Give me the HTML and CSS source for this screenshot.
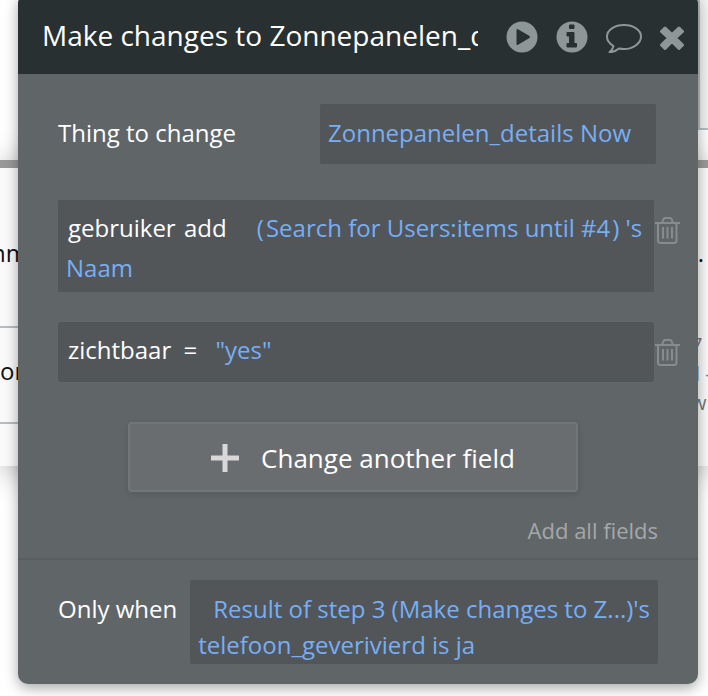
FILE: index.html
```html
<!DOCTYPE html>
<html lang="en">
    <head>
        <meta charset="utf-8">
        <title>Make changes to Zonnepanelen_details</title>
        <link rel="stylesheet" href="styles.css">
    </head>
    <body>
        <div class="editor">

            <!-- page under the dialog -->
            <div class="canvas">
                <div class="preview"></div>
                <div class="sheet">
                    <div class="line first"><span class="cut">nm</span><span class="end">.</span></div>
                    <div class="line second"><span>or</span></div>
                    <div class="notes">
                        <span>7</span>
                        <span class="indent">l -</span>
                        <span>wh</span>
                    </div>
                </div>
            </div>

            <section class="dialog" role="dialog" aria-labelledby="title">
                <header class="titlebar">
                    <h1 id="title">Make changes to Zonnepanelen_details</h1>
                    <button type="button" class="icon" aria-label="Run">
                        <svg width="32" height="32" viewBox="0 0 32 32">
                            <circle cx="16" cy="16" r="15.5" fill="#8e9798"/>
                            <path d="M10.5 9Q10.5 7.5 12 8.3L23.5 15Q24.7 16 23.5 17L12 23.7Q10.5 24.5 10.5 23Z" fill="#293031"/>
                        </svg>
                    </button>
                    <button type="button" class="icon" aria-label="Info">
                        <svg width="32" height="32" viewBox="0 0 32 32">
                            <circle cx="16" cy="16" r="15.5" fill="#8e9798"/>
                            <path d="M13.5 4h4.5v3.5h-4.5zM11 11.5h7v11h2.5V26H11v-3.5h2.5v-7.5H11z" fill="#293031" stroke="#293031" stroke-linejoin="round"/>
                        </svg>
                    </button>
                    <button type="button" class="icon" aria-label="Comment">
                        <svg width="36" height="32" viewBox="0 0 36 32" fill="none" stroke="#8e9798" stroke-width="2" stroke-linejoin="round">
                            <path d="M18 4C27.5 4 35 9 35 15.5S27.5 28 18 28Q15.5 28 13 27.5C10 30 7 31.2 3.5 31.2C5.5 29.5 7 27.5 7.5 25C3 22.5 1 19.5 1 15.5C1 9 8.5 4 18 4Z"/>
                        </svg>
                    </button>
                    <button type="button" class="icon" aria-label="Close">
                        <svg width="24" height="32" viewBox="0 0 24 32" fill="#8e9798" stroke="#8e9798" stroke-width="3" stroke-linejoin="round">
                            <path d="M5 7L12 13.5L19 7L22.5 10.5L15.5 17L22.5 24L19 27.5L12 20.5L5 27.5L1.5 24L8.5 17L1.5 10.5Z"/>
                        </svg>
                    </button>
                </header>

                <div class="fields">
                    <div class="row">
                        <span class="label">Thing to change</span>
                        <div class="expression thing"><a href="#">Zonnepanelen_details Now</a></div>
                    </div>

                    <div class="change">
                        <div class="expression">
                            <span class="name">gebruiker</span>
                            <span class="operator">add</span>
                            <a href="#" class="value"><span class="open">(</span>Search for Users:items until #4<span class="close">)</span> 's Naam</a>
                        </div>
                        <button type="button" class="icon" aria-label="Delete gebruiker">
                            <svg width="26" height="28" viewBox="0 0 26 28" fill="none" stroke="#878c8e" stroke-width="2">
                                <path d="M1 6H26M8 6L9.5 2Q10 1 11 1H16Q17 1 17.5 2L19 6M4 6V23.5Q4 26 6.5 26H20Q22.5 26 22.5 23.5V6M9 10V21.5M13.5 10V21.5M18 10V21.5"/>
                            </svg>
                        </button>
                    </div>

                    <div class="change">
                        <div class="expression">
                            <span class="name">zichtbaar</span>
                            <span class="operator equals">=</span>
                            <a href="#" class="value literal">"yes"</a>
                        </div>
                        <button type="button" class="icon" aria-label="Delete zichtbaar">
                            <svg width="26" height="28" viewBox="0 0 26 28" fill="none" stroke="#878c8e" stroke-width="2">
                                <path d="M1 6H26M8 6L9.5 2Q10 1 11 1H16Q17 1 17.5 2L19 6M4 6V23.5Q4 26 6.5 26H20Q22.5 26 22.5 23.5V6M9 10V21.5M13.5 10V21.5M18 10V21.5"/>
                            </svg>
                        </button>
                    </div>

                    <button type="button" class="add">
                        <svg width="28" height="28" viewBox="0 0 28 28" stroke="#d8d8d8" stroke-width="5">
                            <path d="M0 14H28M14 0V28"/>
                        </svg>
                        Change another field
                    </button>

                    <a href="#" class="all">Add all fields</a>
                </div>

                <footer class="condition">
                    <span class="label">Only when</span>
                    <div class="expression"><a href="#">Result of step 3 (Make changes to Z...)'s telefoon_geverivierd is ja</a></div>
                </footer>
            </section>
        </div>
    </body>
</html>
```

FILE: styles.css
```css
* {
    box-sizing: border-box;
}

body {
    margin: 0;
    background: #ffffff;
    font-family: "Open Sans", sans-serif;
    font-size: 24px;
    line-height: 40px;
}

h1 {
    margin: 0;
    font-weight: 400;
}

a {
    color: #77aef5;
    text-decoration: none;
}

button {
    font-family: inherit;
    cursor: pointer;
}

/* the dialog and the page share one cell */
.editor {
    display: grid;
    grid-template-columns: minmax(0, 1fr);
    overflow: hidden;
}

.canvas, .dialog {
    grid-area: 1 / 1;
}

.preview {
    width: 10px;
    height: 130px;
    margin: 0 0 30px auto;
    border: solid #b4bec2;
    border-width: 0 0 2px 2px;
    background: #f0f1f1;
}

.sheet {
    height: 306px;
    border-top: 8px solid #999999;
    background: #fafafa;
    box-shadow: 0 4px 32px rgba(0, 0, 0, 0.3);
}

.line {
    display: flex;
    justify-content: space-between;
    border-bottom: 2px solid #b4bec2;
    color: #111111;
    margin-right: 50%;
}

.first {
    height: 160px;
    padding-top: 65px;
    margin-right: 0;
    border-image: linear-gradient(to right, #b4bec2 50%, transparent 50%) 1;
}

.second {
    height: 96px;
    padding-top: 23px;
}

.cut {
    margin-left: -9px;
}

.end {
    margin-right: 4px;
}

.notes {
    display: flex;
    flex-direction: column;
    width: 17px;
    margin: -94px 0 0 auto;
    color: #777777;
    font-size: 20px;
    line-height: 29px;
    white-space: nowrap;
}

.indent {
    margin-left: 4px;
}

.dialog {
    margin: -6px 10px 12px 18px;
    border-radius: 10px;
    background: #606568;
    box-shadow: 0 4px 14px rgba(0, 0, 0, 0.35);
    color: #ffffff;
    z-index: 1;
}

.titlebar {
    display: flex;
    align-items: center;
    gap: 18px;
    height: 80px;
    padding: 6px 14px 0 24px;
    border-radius: 10px 10px 0 0;
    background: #293031;
}

.titlebar h1 {
    flex: 1;
    margin-right: 10px;
    padding-bottom: 4px;
    overflow: hidden;
    font-size: 28px;
    white-space: nowrap;
}

.icon {
    display: flex;
    flex: none;
    padding: 0;
    border: 0;
    background: none;
}

.fields {
    display: flex;
    flex-direction: column;
    gap: 30px;
    padding: 30px 40px 8px;
    border-bottom: 2px solid #595d60;
}

.row {
    display: flex;
    justify-content: space-between;
    align-items: center;
    margin: 0 2px 6px 0;
}

.row .label {
    padding-bottom: 2px;
}

.expression {
    min-height: 60px;
    padding: 9px 8px 3px;
    border-radius: 2px;
    background: #525659;
}

.thing {
    width: 336px;
}

.change {
    display: flex;
    align-items: flex-start;
    margin-right: -22px;
}

.change .expression {
    flex: 1;
    padding: 8px 8px 4px;
}

.change .icon {
    margin-top: 17px;
}

.name, .operator {
    margin-left: 2px;
}

.equals {
    margin-left: 6px;
}

.value {
    margin-left: 24px;
}

.literal {
    margin-left: 12px;
}

.open {
    margin-right: 2px;
}

.close {
    margin-left: 2px;
}

.add {
    display: flex;
    align-items: center;
    justify-content: center;
    gap: 22px;
    height: 70px;
    margin: 10px 80px 0 70px;
    padding: 2px 0 0 20px;
    border: 2px solid #727679;
    border-radius: 4px;
    background: #6a6d70;
    box-shadow: 0 2px 6px rgba(0, 0, 0, 0.12);
    color: #ffffff;
    font-size: 26px;
}

.all {
    align-self: flex-end;
    margin-top: -12px;
    color: #a5a7a8;
    font-size: 22px;
}

.condition {
    display: flex;
    gap: 13px;
    padding: 20px 40px;
    line-height: 36px;
}

.condition .label {
    flex: none;
    padding-top: 11px;
}

.condition .expression {
    flex: 1;
    padding: 11px 0 1px 8px;
    text-indent: 15px;
}
```
